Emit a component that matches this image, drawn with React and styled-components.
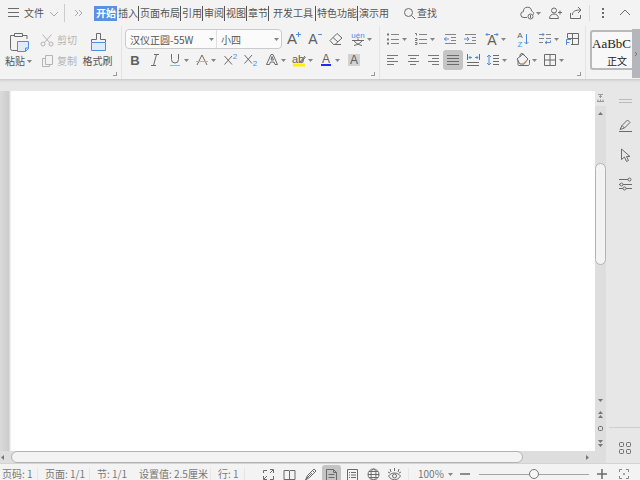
import React, { useState } from "react";
import styled, { createGlobalStyle, css } from "styled-components";

const Global = createGlobalStyle`
  * { box-sizing: border-box; }
  body { margin: 0; overflow: hidden; }
  body, button, select, input {
    font-family: "Noto Sans CJK SC", "Noto Sans", sans-serif;
    font-size: 10px;
    color: #555;
  }
  button, select { border: 0; padding: 0; margin: 0; background: none; }
`;

const BLUE = "#4f8de0";

const Window = styled.div`
  height: 100vh;
  display: flex;
  flex-direction: column;
  background: #e7e7e7;
`;

const Row = styled.div`
  display: flex;
  align-items: center;
`;

const Header = styled.header`
  background: #f3f3f3;
  border-bottom: 1px solid #cfcfcf;
  box-shadow: 0 1px 2px #d2d2d2;
  z-index: 1;
`;

const MenuBar = styled(Row)`
  height: 26px;
  padding: 0 6px 0 4px;
`;

const MenuButton = styled.button`
  display: flex;
  align-items: center;
  height: 20px;
  line-height: 20px;
  white-space: nowrap;
`;

const Rule = styled.div`
  width: 1px;
  height: ${(p) => p.$h || 16}px;
  background: ${(p) => p.$c || "#dddddd"};
  flex: none;
`;

const Tabs = styled.nav`
  display: flex;
  align-items: center;
  margin-left: 4px;
`;

const Tab = styled.button`
  height: 15px;
  line-height: 14px;
  padding: 0 0 0 1px;
  border-right: 1px solid #555;
  white-space: nowrap;
  ${(p) => p.$wide && css`padding: 0 2px 0 4px;`}
  ${(p) => p.$last && css`border-right: 0;`}
  ${(p) =>
    p.$active &&
    css`
      padding-left: 2px;
      color: #fff;
      font-weight: 700;
      background: #5b8fe8;
      border-right-color: #5b8fe8;
    `}
`;

const Spacer = styled.div`
  flex: 1;
`;

const Ribbon = styled.div`
  display: flex;
  height: 53px;
`;

const Group = styled.section`
  position: relative;
  flex: none;
  width: ${(p) => p.$w}px;
  padding: 3px 0 0 ${(p) => p.$pad || 0}px;
  border-right: 1px solid #e4e4e4;
`;

const Launcher = styled.button`
  position: absolute;
  right: 4px;
  bottom: 3px;
  width: 4px;
  height: 4px;
  border-right: 1px solid #999;
  border-bottom: 1px solid #999;
`;

const ToolRow = styled(Row)`
  height: 20px;
  margin-bottom: 1px;
`;

const Tool = styled.button`
  display: flex;
  align-items: center;
  flex: none;
  width: ${(p) => p.$w || 20}px;
  height: 20px;
  border-radius: 3px;
  background: ${(p) => (p.$on ? "#c4c4c4" : "transparent")};
`;

const Svg = styled.svg`
  display: block;
  flex: none;
  fill: none;
  stroke: ${(p) => p.$c || "#6b6b6b"};
  stroke-width: 1;
  overflow: visible;
`;

const Letter = styled.text`
  stroke: none;
  fill: ${(p) => (p.$blue ? BLUE : "#606060")};
  text-anchor: middle;
  font-family: "Liberation Sans", sans-serif;
  font-size: ${(p) => p.$s}px;
  font-weight: ${(p) => (p.$bold ? 700 : 400)};
`;

const CaretSvg = styled(Svg)`
  margin-left: ${(p) => p.$ml ?? -1}px;
  fill: #858585;
  stroke: none;
`;

const Clipboard = styled.div`
  display: grid;
  grid-template-columns: 37px 42px 37px;
`;

const BigButton = styled.button`
  display: flex;
  flex-direction: column;
  align-items: center;
  padding-top: 2px;
  line-height: 16px;
  white-space: nowrap;
`;

const SmallButton = styled.button`
  display: flex;
  align-items: center;
  height: 21px;
  color: #b4b4b4;
  white-space: nowrap;
`;

const Combos = styled(Row)`
  width: 157px;
  height: 20px;
  margin-right: 1px;
  border: 1px solid #cbcbcb;
  border-radius: 4px;
  background: #fbfbfb;
`;

const Combo = styled.label`
  display: flex;
  align-items: center;
  width: ${(p) => p.$w}px;
  padding-right: 2px;
  & + & { border-left: 1px solid #dedede; }
  select {
    flex: 1;
    min-width: 0;
    height: 18px;
    padding-left: 4px;
    appearance: none;
    outline: none;
  }
`;

const Styles = styled.div`
  display: flex;
  flex: 1;
  min-width: 0;
  padding: 3px 0 2px 4px;
`;

const StyleCard = styled.button`
  flex: 1;
  min-width: 0;
  height: 40px;
  margin-top: 1px;
  padding-top: 1px;
  overflow: hidden;
  text-align: left;
  border: 2px solid #b9b9b9;
  border-right: 0;
  border-radius: 3px 0 0 3px;
  background: #f8f8f8;
  color: #222;
`;

const Sample = styled.span`
  display: block;
  font: 13px/20px "Liberation Serif", serif;
  white-space: nowrap;
`;

const StyleName = styled.span`
  display: block;
  padding-left: 15px;
  line-height: 14px;
`;

const GalleryMore = styled.button`
  width: 8px;
  height: 49px;
  flex: none;
  background: #b4b6bc;
`;

const Body = styled.main`
  display: flex;
  flex: 1;
  min-height: 0;
  padding-top: 11px;
`;

const Editor = styled.div`
  display: grid;
  flex: 1;
  min-width: 0;
  grid-template-columns: 11px 1fr 11px;
  grid-template-rows: 1fr 12px;
`;

const Gutter = styled.div`
  background: linear-gradient(90deg, #dadada, #cccccc 9px, #efefef 10px);
`;

const Page = styled.article`
  background: #fff;
  outline: none;
`;

const VScroll = styled.div`
  display: flex;
  flex-direction: column;
  align-items: center;
  background: #dedede;
`;

const Arrow = styled.button`
  display: grid;
  place-items: center;
  flex: none;
  width: ${(p) => p.$w || 11}px;
  height: ${(p) => p.$h || 15}px;
  background: ${(p) => p.$bg || "transparent"};
`;

const Track = styled.div`
  display: flex;
  flex: 1;
  min-height: 0;
  min-width: 0;
  align-self: stretch;
  flex-direction: ${(p) => (p.$v ? "column" : "row")};
`;

const Thumb = styled.div`
  flex: ${(p) => p.$size};
  background: #f3f3f3;
  border: 1px solid #b3b3b3;
  border-radius: 6px;
`;

const Gap = styled.div`
  flex: ${(p) => p.$size};
`;

const HScroll = styled.div`
  grid-column: 1 / -1;
  display: flex;
  align-items: center;
  background: #dedede;
`;

const Side = styled.aside`
  display: flex;
  flex-direction: column;
  align-items: center;
  width: 34px;
  padding: 0 0 1px 3px;
`;

const SideButton = styled.button`
  display: grid;
  place-items: center;
  width: 20px;
  height: 29px;
`;

const SideRule = styled.div`
  align-self: stretch;
  height: 1px;
  background: #d0d0d0;
  margin-bottom: 5px;
`;

const Status = styled.footer`
  display: flex;
  align-items: center;
  height: 17px;
  padding-top: 4px;
  border-top: 1px solid #d4d4d4;
  background: #f3f3f3;
  color: #777;
`;

const StatusItem = styled.span`
  flex: none;
  width: ${(p) => p.$w}px;
  padding-left: ${(p) => p.$pad || 7}px;
  line-height: 12px;
  white-space: nowrap;
  border-right: 1px solid ${(p) => (p.$line ? "#e6e6e6" : "transparent")};
`;

const ViewButton = styled(Tool)`
  width: 19px;
  height: 19px;
  margin-right: 2px;
  justify-content: center;
`;

const ZoomButton = styled.button`
  display: flex;
  align-items: center;
  width: 42px;
  height: 12px;
  line-height: 12px;
  color: #777;
`;

const Slider = styled.input`
  appearance: none;
  flex: none;
  width: 110px;
  height: 10px;
  margin: 0 8px 0 9px;
  background: transparent;
  &::-webkit-slider-runnable-track {
    height: 1px;
    background: #a5a5a5;
  }
  &::-webkit-slider-thumb {
    appearance: none;
    width: 10px;
    height: 10px;
    margin-top: -5px;
    border: 1px solid #777;
    border-radius: 50%;
    background: #f6f6f6;
  }
`;

const Icon = ({ c, s = 20, w, h, children }) => (
  <Svg width={w || s} height={h || s} viewBox={`0 0 ${w || s} ${h || s}`} $c={c} aria-hidden="true">
    {children}
  </Svg>
);

const Caret = ({ ml }) => (
  <CaretSvg width="5" height="4" viewBox="0 0 5 4" $ml={ml} aria-hidden="true">
    <path d="M0 1h5L2.5 4z" />
  </CaretSvg>
);

const listLines = <path stroke="#858585" d="M8 5.5h8M8 10.5h8M8 14.5h8" />;

const icons = {
  grow: <><Letter x="9" y="15" $s={15}>A</Letter><path stroke={BLUE} d="M13 5.5h5M15.5 3v5" /></>,
  shrink: <><Letter x="9" y="15" $s={14}>A</Letter><path stroke={BLUE} d="M14 5.5h4" /></>,
  eraser: <path d="M4 11.5 11 4.5l5 4.5-7 6.5H7.5zM7 8.5l5 4.5M8 15.5h7" />,
  pinyin: <><Letter x="10" y="9" $s={8} $blue>uén</Letter><path d="M4 11.5h12M10 9.500v2M6 11.500c1 2.500 4 4 8 5M14 11.500c-1 2.500-4 4-8 5" /></>,
  bold: <Letter x="10" y="15" $s={13} $bold>B</Letter>,
  italic: <path d="M9 4.500h5M6 15.500h5M11.500 4.500l-3 11" />,
  underline: <><path d="M6.500 4v5.500a3.500 3.500 0 0 0 7 0V4" /><path stroke="#8fb4e8" d="M5 15.500h10" /></>,
  strike: <><path d="M5 15 10 5l5 10" /><path stroke="#e5a36d" d="M4 11.500h12" /></>,
  sup: <><path d="m4.500 6 7.500 8.500M12 6l-7.500 8.500" /><Letter x="15" y="9" $s={8} $blue>2</Letter></>,
  sub: <><path d="m4.500 5 7.500 8.500M12 5l-7.500 8.500" /><Letter x="15" y="16" $s={8} $blue>2</Letter></>,
  outline: <path d="M4.500 14.500 9 4.500h2l4.500 10H13l-1-2.500H8.500l-1 2.500zM9 10h2.500L10 6.500z" />,
  highlight: <><path strokeWidth="3" stroke="#fff000" d="M4 15h12" /><Letter x="9" y="13" $s={11}>ab</Letter><path d="m11 12 5-6M12 12.500l4.500-5.500" /></>,
  color: <><Letter x="10" y="13" $s={12}>A</Letter><path strokeWidth="2" stroke="#2525ff" d="M5 15h10" /></>,
  shade: <><rect x="4" y="4" width="12" height="12" fill="#d2d2d2" stroke="none" /><Letter x="10" y="14" $s={12}>A</Letter></>,
  bullets: <>{listLines}<path strokeWidth="2" stroke="#777" d="M4 5.500h2M4 10.500h2M4 14.500h2" /></>,
  numbers: <>{listLines}<path stroke="#777" d="M4 4.500h1.500v2M4 9.500h2v2H4M4 13.500h2v2H4" /></>,
  outdent: <><path stroke="#858585" d="M5 5.500h11M11 8.500h5M11 11.500h5M5 14.500h11" /><path stroke={BLUE} d="M9 10H4M6.500 8 4.500 10l2 2" /></>,
  indent: <><path stroke="#858585" d="M5 5.500h11M12 8.500h4M12 11.500h4M5 14.500h11" /><path stroke={BLUE} d="M4 10h5M7 8l2 2-2 2" /></>,
  scale: <><Letter x="10" y="16" $s={14}>A</Letter><path stroke={BLUE} d="M4 5.500h4M5.500 4 4 5.500 5.500 7M12 5.500h4M14.500 4 16 5.500 14.500 7" /></>,
  sort: <><Letter x="8" y="9" $s={8}>A</Letter><Letter x="8" y="18" $s={8} $blue>Z</Letter><path stroke={BLUE} d="M14.500 5v10M12.500 13l2 2 2-2" /></>,
  wrap: <><path stroke="#858585" d="M11 5.500h5M11 9.500h5M4 9.500h5M4 13.500h4" /><path stroke={BLUE} d="M4 5.500h5M7.500 4 9 5.500 7.500 7M15.500 11.500v2H10M12 12l-2 1.500 2 1.500" /></>,
  tabs: <><path d="M5.500 9V4.500h11v11H9M10.500 4.500v11M5.500 9.500h11" /><path stroke={BLUE} d="M4.500 16v-5.500H9M4.500 13.500h3" /></>,
  left: <path stroke="#777" d="M4 5.500h11M4 8.500h7M4 11.500h11M4 14.500h7" />,
  center: <path stroke="#777" d="M5 5.500h11M7 8.500h6M5 11.500h11M7 14.500h6" />,
  right: <path stroke="#777" d="M5 5.500h11M9 8.500h7M5 11.500h11M9 14.500h7" />,
  justify: <path d="M4 5.500h12M4 8.500h12M4 11.500h12M4 14.500h12" />,
  distribute: <><path d="M4 12.500h12M4 15.500h12M4.500 4v6M16.500 4v6" /><path stroke={BLUE} d="M6 7.500h3M7.500 6 6 7.500 7.500 9M12 7.500h3M13.500 6 15 7.500 13.500 9" /></>,
  spacing: <><path d="M10 5.500h6M10 8.500h6M10 11.500h6M10 14.500h6" /><path stroke={BLUE} d="M6 5v10M4 7l2-2 2 2M4 13l2 2 2-2" /></>,
  fill: <><path d="m4 9 6-5 5 5-4 5H7zM7 7V5.500a2 2 0 0 1 4 0M5 10v4.500a1 1 0 0 0 1 1h9c1 0 1.500-1 1.500-2V10" /><path stroke="#e08a3c" strokeWidth="1.500" d="m10 14.500 3-3" /></>,
  border: <path d="M4.500 4.500h11v11h-11zM10 4.500v11M4.500 10h11" />,
};

const topTools = [["grow", "增大字号", 21], ["shrink", "减小字号", 22], ["eraser", "清除格式", 22], ["pinyin", "拼音指南", 25, 1]];
const fontTools = [["bold", "加粗"], ["italic", "倾斜"], ["underline", "下划线", 27, 1], ["strike", "删除线", 28, 1], ["sup", "上标"], ["sub", "下标", 22], ["outline", "文字效果", 27, 1], ["highlight", "突出显示", 27, 1], ["color", "字体颜色", 28, 1], ["shade", "字符底纹"]];
const paraTop = [["bullets", "项目符号", 28, 1], ["numbers", "编号", 29, 1], ["outdent", "减少缩进"], ["indent", "增加缩进", 22], ["scale", "字符缩放", 30, 1], ["sort", "排序", 23], ["wrap", "换行标记", 27, 1], ["tabs", "制表位"]];
const paraBottom = [["left", "左对齐"], ["center", "居中"], ["right", "右对齐"], ["justify", "两端对齐"], ["distribute", "分散对齐"], ["spacing", "行距", 30, 1], ["fill", "底纹颜色", 27, 1], ["border", "边框", 27, 1]];

const Tools = ({ items, on }) =>
  items.map(([name, label, w, caret]) => (
    <Tool key={name} $w={w} $on={on === name} aria-label={label} title={label}>
      <Icon>{icons[name]}</Icon>
      {caret && <Caret />}
    </Tool>
  ));

const tabNames = ["开始", "插入", "页面布局", "引用", "审阅", "视图", "章节", "开发工具", "特色功能", "演示用"];

const viewIcons = [
  ["全屏", <path d="M2.500 6V3.500H6M9 2.500h3.500V6M2.500 9v3.500H6M12.500 9v3.500H9M9 6l3-3M6 9l-3 3" />],
  ["阅读", <path d="M2 3.500h5l.500.500.500-.500h5v9H2zM7.500 4v9" />],
  ["写作", <path d="m2.500 13 2-4.500L11 2l2 2-6.500 6.500zM4.500 8.500l2 2M9.500 3.500l2 2M3 12l6-6" />],
  ["页面视图", <path d="M2.500 2.500h7l3 3v8h-10zM9.500 2.500v3h3M4.500 7.500h6M4.500 10.500h6" />],
  ["大纲", <path d="M2.500 2.500h10v11h-10zM4 5.500h1M6 5.500h5M4 8h1M6 8h5M4 10.500h1M6 10.500h5" />],
  ["网页", <><circle cx="7.500" cy="7.500" r="5.500" /><ellipse cx="7.500" cy="7.500" rx="2.500" ry="5.500" /><path d="M2 7.500h11M3 4.500h9M3 10.500h9" /></>],
  ["护眼", <><path d="M1.500 9c3-4 9-4 12 0-3 5-9 5-12 0zM7.500 1v3M3 2l1 3M12 2l-1 3M1 5l2 1M14 5l-2 1" /><circle cx="7.500" cy="9" r="2" /></>],
];

export default function App() {
  const [tab, setTab] = useState("开始");
  return (
    <Window>
      <Global />
      <Header>
        <MenuBar>
          <MenuButton>
            <Icon><path d="M4 5.500h11M4 9.500h11M4 13.500h11" /></Icon>
            文件
            <Icon c="#aaa"><path d="m6 9 4 4 4-4" /></Icon>
          </MenuButton>
          <Rule $h={18} $c="#cccccc" />
          <MenuButton aria-label="更多">
            <Icon w={25} h={20} c="#aaa"><path d="m10 7 3 3-3 3M14 7l3 3-3 3" /></Icon>
          </MenuButton>
          <Tabs>
            {tabNames.map((t, i) => (
              <Tab key={t} $active={t === tab} $wide={t === "开发工具"} $last={i === 9} onClick={() => setTab(t)}>{t}</Tab>
            ))}
          </Tabs>
          <MenuButton>
            <Icon w={28} h={20}><circle cx="19.500" cy="9.500" r="4" /><path d="m22.500 12.500 3.500 3.500" /></Icon>
            查找
          </MenuButton>
          <Spacer />
          <Tool $w={28} aria-label="云同步">
            <Icon><path d="M10 14.500H7a3 3 0 0 1-.500-6 4 4 0 0 1 8-.500c1.500.500 2.500 2 2 3.500" /><circle cx="13.500" cy="13.500" r="2.500" /><path d="M13.500 12v3" /></Icon>
            <Caret />
          </Tool>
          <Tool $w={21} aria-label="协作">
            <Icon><circle cx="9" cy="7.500" r="2.500" /><path d="M4.500 15.500c0-6 9-6 9 0zM13 9.500h4M15 7.500v4" /></Icon>
          </Tool>
          <Tool $w={23} aria-label="分享">
            <Icon><path d="M4.500 10v5.500h10V12M6.500 12c0-4 3-5 8-5M12 4l3 3-3 3" /></Icon>
          </Tool>
          <Rule />
          <Tool $w={25} aria-label="更多选项">
            <Icon w={26}><path strokeWidth="2" d="M13 5v2M13 9v2M13 13v2" /></Icon>
          </Tool>
          <Tool $w={19} aria-label="收起功能区">
            <Icon><path d="m5 12 5-5 5 5" /></Icon>
          </Tool>
        </MenuBar>

        <Ribbon>
          <Group $w={122}>
            <Clipboard>
              <BigButton>
                <Icon s={22}><path d="M14 19.500H4.500a2 2 0 0 1-2-2V4.500h4M15 4.500h4V8M6.500 2.500h8v3h-8z" /><path stroke={BLUE} fill="#dfeafa" d="M9.500 10.500h11v7l-3 3h-8z" /><path stroke={BLUE} d="M17.500 20v-3h3" /></Icon>
                <Row>粘贴<Caret ml={2} /></Row>
              </BigButton>
              <div>
                <SmallButton><Icon c="#b4b4b4"><circle cx="6" cy="14" r="2" /><circle cx="14" cy="14" r="2" /><path d="m7.500 12.500 7-8M12.500 12.500l-7-8" /></Icon>剪切</SmallButton>
                <SmallButton><Icon c="#b4b4b4"><path d="M8.500 4.500h7v9h-7zM8 7.500H5.500v8h7V14" /></Icon>复制</SmallButton>
              </div>
              <BigButton>
                <Icon s={22}><path d="M4.500 11V8.500h5v-6h4v6h5V11" /><path stroke={BLUE} fill="#dfeafa" d="M4.500 11.500h14v8h-14z" /></Icon>
                格式刷
              </BigButton>
            </Clipboard>
            <Launcher aria-label="剪贴板" />
          </Group>

          <Group $w={258} $pad={3}>
            <ToolRow>
              <Combos>
                <Combo $w={90}>
                  <select aria-label="字体"><option>汉仪正圆-55W</option></select>
                  <Caret />
                </Combo>
                <Combo $w={65}>
                  <select aria-label="字号"><option>小四</option></select>
                  <Caret />
                </Combo>
              </Combos>
              <Tools items={topTools} />
            </ToolRow>
            <ToolRow><Tools items={fontTools} /></ToolRow>
            <Launcher aria-label="字体设置" />
          </Group>

          <Group $w={206} $pad={3}>
            <ToolRow><Tools items={paraTop} /></ToolRow>
            <ToolRow><Tools items={paraBottom} on="justify" /></ToolRow>
            <Launcher aria-label="段落设置" />
          </Group>

          <Styles>
            <StyleCard>
              <Sample>AaBbC</Sample>
              <StyleName>正文</StyleName>
            </StyleCard>
            <GalleryMore aria-label="更多样式"><Icon w={8} h={10} c="#777"><path d="m3 3 2 2-2 2" /></Icon></GalleryMore>
          </Styles>
        </Ribbon>
      </Header>

      <Body>
        <Editor>
          <Gutter />
          <Page contentEditable suppressContentEditableWarning aria-label="文档" />
          <VScroll>
            <Arrow $bg="#e7e7e7" aria-label="拆分"><Icon s={11} c="#999"><path d="M3 1.500h5M4 3.500h3M5.500 2v3M3 8V6.500M5.500 8V6.500M8 8V6.500M2 8.500h7" /></Icon></Arrow>
            <Arrow $h={14} aria-label="向上"><Icon s={5} c="none"><path fill="#777" d="M0 4h5L2.500 1z" /></Icon></Arrow>
            <Track $v>
              <Gap $size={43} />
              <Thumb $size={102} />
              <Gap $size={129} />
            </Track>
            <Arrow $h={14} aria-label="向下"><Icon s={5} c="none"><path fill="#777" d="M0 1h5L2.500 4z" /></Icon></Arrow>
            <Arrow $h={14} aria-label="上一页"><Icon s={7} c="none"><path fill="#777" d="M1 3h5L3.500 0zM1 7h5L3.500 4z" /></Icon></Arrow>
            <Arrow aria-label="选择浏览对象"><Icon s={7}><rect x="1.500" y="1.500" width="4" height="4" rx="1" /></Icon></Arrow>
            <Arrow aria-label="下一页"><Icon s={7} c="none"><path fill="#777" d="M1 0h5L3.500 3zM1 4h5L3.500 7z" /></Icon></Arrow>
          </VScroll>
          <HScroll>
            <Arrow $w={11} $h={12} aria-label="向左"><Icon w={11} h={5} c="none"><path fill="#777" d="M4 0v5L1 2.500z" /></Icon></Arrow>
            <Track>
              <Thumb $size={512} />
              <Gap $size={59} />
            </Track>
            <Arrow $w={24} $h={12} aria-label="向右"><Icon w={24} h={5} c="none"><path fill="#777" d="M4 0v5l3-2.500z" /></Icon></Arrow>
          </HScroll>
        </Editor>
        <Side>
          <Icon c="#bbb"><path d="M4 8.500h13M4 11.500h13" /></Icon>
          <SideButton aria-label="样式"><Icon><path d="m5 13.500 2-4L12.500 4l2.500 2.500-5.500 5.500zM7 9.500l2.500 2.500M4 15.500h13" /></Icon></SideButton>
          <SideButton aria-label="选择"><Icon><path d="M6.500 4v10.500l3-2.500 2 4.500 2-1-2-4h3.500z" /></Icon></SideButton>
          <SideButton aria-label="属性"><Icon><path d="M4 5.500h9M4 10.500h1M8 10.500h9M4 14.500h4M11 14.500h6" /><circle cx="14.500" cy="5.500" r="1.500" /><circle cx="6.500" cy="10.500" r="1.500" /><circle cx="9.500" cy="14.500" r="1.500" /></Icon></SideButton>
          <Spacer />
          <SideRule />
          <SideButton aria-label="应用"><Icon><rect x="4.500" y="4.500" width="4" height="4" rx="1" /><rect x="11.500" y="4.500" width="4" height="4" rx="1" /><rect x="4.500" y="11.500" width="4" height="4" rx="1" /><rect x="11.500" y="11.500" width="4" height="4" rx="1" /></Icon></SideButton>
        </Side>
      </Body>

      <Status>
        <StatusItem $w={38} $pad={2} $line>页码: 1</StatusItem>
        <StatusItem $w={52} $line>页面: 1/1</StatusItem>
        <StatusItem $w={42}>节: 1/1</StatusItem>
        <StatusItem $w={79} $line>设置值: 2.5厘米</StatusItem>
        <StatusItem $w={34} $line>行: 1</StatusItem>
        <StatusItem $w={14} />
        {viewIcons.map(([label, d]) => (
          <ViewButton key={label} $on={label === "页面视图"} aria-label={label}>
            <Icon s={15}>{d}</Icon>
          </ViewButton>
        ))}
        <Spacer />
        <Rule $h={12} $c="#e6e6e6" />
        <StatusItem $w={9} $pad={8} />
        <ZoomButton>100%<Caret ml={4} /></ZoomButton>
        <Tool $w={10} aria-label="缩小"><Icon s={10}><path strokeWidth="1.500" d="M0 5h10" /></Icon></Tool>
        <Slider type="range" min="0" max="100" defaultValue="50" aria-label="缩放" />
        <Tool $w={22} aria-label="放大"><Icon s={10}><path strokeWidth="1.500" d="M0 5h10M5 0v10" /></Icon></Tool>
        <Tool $w={10} aria-label="适应窗口"><Icon s={10} c="#888"><path d="M.500 3V.500H3M7 .500h2.500V3M.500 7v2.500H3M9.500 7v2.500H7M4 5h2M5 4v2" /></Icon></Tool>
        <StatusItem $w={11} />
      </Status>
    </Window>
  );
}
